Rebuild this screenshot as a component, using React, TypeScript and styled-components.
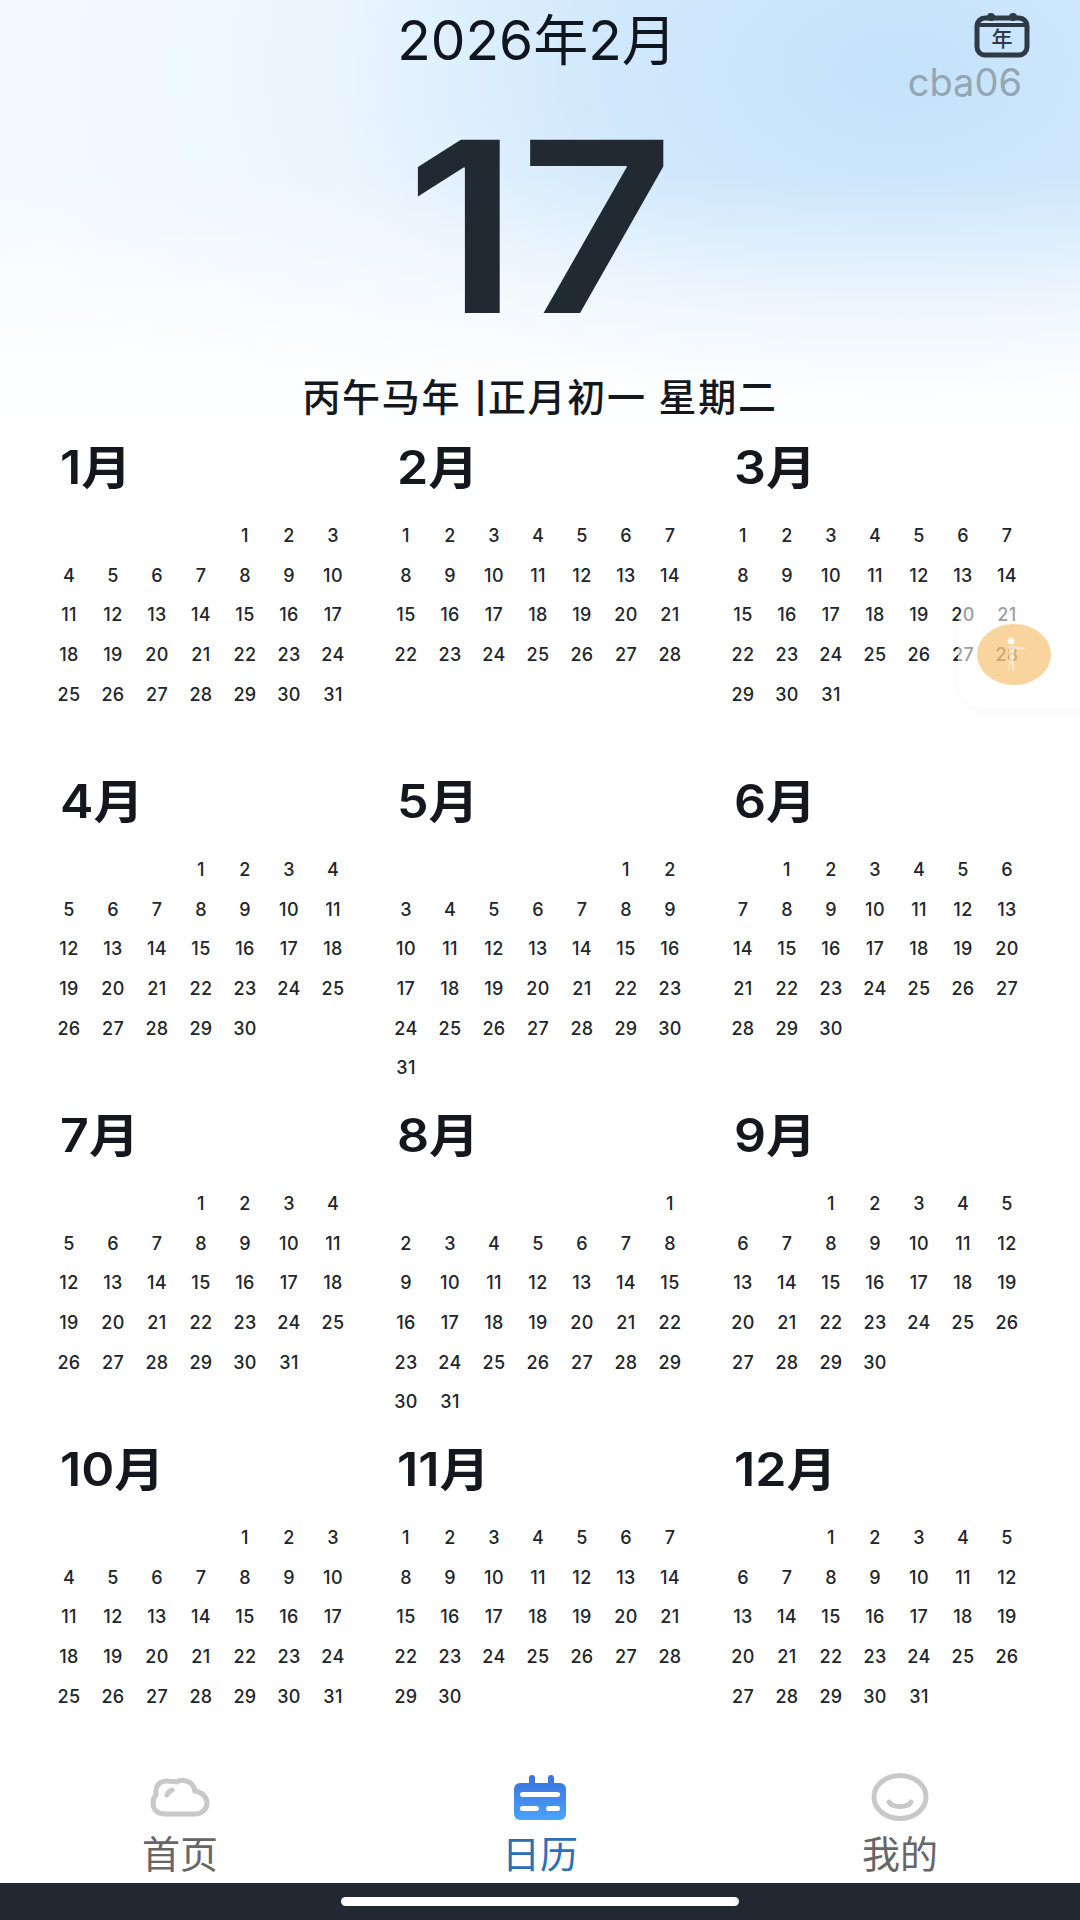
import styled, { createGlobalStyle } from 'styled-components';

const MONTHS = [
  { name: '1月', offset: 4, days: 31 },
  { name: '2月', offset: 0, days: 28 },
  { name: '3月', offset: 0, days: 31 },
  { name: '4月', offset: 3, days: 30 },
  { name: '5月', offset: 5, days: 31 },
  { name: '6月', offset: 1, days: 30 },
  { name: '7月', offset: 3, days: 31 },
  { name: '8月', offset: 6, days: 31 },
  { name: '9月', offset: 2, days: 30 },
  { name: '10月', offset: 4, days: 31 },
  { name: '11月', offset: 0, days: 30 },
  { name: '12月', offset: 2, days: 31 },
];

const App = () => {
  return (
    <Page>
      <GlobalStyle />
      <Hero>
        <Header>
          <span />
          <MonthTitle>2026年2月</MonthTitle>
          <YearSwitch>
            <YearIcon>
              <svg width='56' height='46' viewBox='0 0 56 46'>
                <rect x='3' y='6' width='50' height='37' rx='8' fill='none' stroke='#2e3a45' strokeWidth='5' />
                <path d='M3 13h50' stroke='#2e3a45' strokeWidth='4' />
                <circle cx='17' cy='5' r='4' fill='#2e3a45' />
                <circle cx='39' cy='5' r='4' fill='#2e3a45' />
              </svg>
              <YearGlyph>年</YearGlyph>
            </YearIcon>
            <UserTag>cba06</UserTag>
          </YearSwitch>
        </Header>
        <BigDay>17</BigDay>
        <LunarLine>
          丙午马年 <LunarBar>|</LunarBar>正月初一 星期二
        </LunarLine>
      </Hero>

      <YearGrid>
        {MONTHS.map((m) => (
          <Month key={m.name}>
            <MonthName>{m.name}</MonthName>
            <Days>
              {Array.from({ length: m.offset }, (_, i) => (
                <span key={'e' + i} />
              ))}
              {Array.from({ length: m.days }, (_, i) => (
                <Day key={i}>{i + 1}</Day>
              ))}
            </Days>
          </Month>
        ))}
      </YearGrid>

      <FloatPanel>
        <FloatBall>
          <svg width='26' height='34' viewBox='0 0 26 34' fill='#fff'>
            <circle cx='10' cy='4' r='3.5' opacity='0.8' />
            <path d='M7.500 9h5l12 2v1l-11.500 .5-.5 8 1 13h-2l-1.500-11-1.500 11H7.500l1-14z' opacity='0.55' />
          </svg>
        </FloatBall>
      </FloatPanel>

      <TabBar>
        <Tab>
          <TabIcon>
            <svg width='60' height='40' viewBox='0 0 60 40' fill='none' stroke='#c8c8c8' strokeWidth='5'>
              <path d='M15 37C7 37 3 32 3 26c0-4 1-6 3-8C5 9 9 4 17 4c4 0 7 1 10 1 3-2 6-2 9-1 5 1 8 5 9 10 7 1 12 6 12 12 0 6-5 11-12 11z' />
              <path d='M17 18c1-3 3-4 5-5' strokeLinecap='round' />
            </svg>
          </TabIcon>
          <TabLabel>首页</TabLabel>
        </Tab>
        <Tab $active>
          <TabIcon>
            <svg width='54' height='47' viewBox='0 0 54 47'>
              <defs>
                <linearGradient id='calFill' x1='0' y1='0' x2='0' y2='1'>
                  <stop offset='0' stopColor='#3a78df' />
                  <stop offset='1' stopColor='#4aa4ff' />
                </linearGradient>
              </defs>
              <rect x='16' y='1' width='6' height='16' rx='3' fill='#3a78df' />
              <rect x='35' y='1' width='6' height='16' rx='3' fill='#3a78df' />
              <rect x='1' y='9' width='52' height='37' rx='6' fill='url(#calFill)' />
              <rect x='7' y='18' width='40' height='5' rx='2.5' fill='#fff' />
              <rect x='7' y='32' width='19' height='5' rx='2.5' fill='#fff' />
              <rect x='33' y='32' width='14' height='5' rx='2.5' fill='#fff' />
            </svg>
          </TabIcon>
          <TabLabel $active>日历</TabLabel>
        </Tab>
        <Tab>
          <TabIcon>
            <svg width='58' height='48' viewBox='0 0 58 48' fill='none' stroke='#c8c8c8' strokeWidth='5'>
              <ellipse cx='29' cy='24' rx='26' ry='21.5' />
              <path d='M18 29c3 6 19 6 22 0' strokeLinecap='round' />
            </svg>
          </TabIcon>
          <TabLabel>我的</TabLabel>
        </Tab>
      </TabBar>

      <NavBar>
        <HomePill />
      </NavBar>
    </Page>
  );
};

const GlobalStyle = createGlobalStyle`
  html, body {
    margin: 0;
    padding: 0;
    background: #fff;
  }
  * {
    box-sizing: border-box;
  }
`;

const Page = styled.div`
  position: relative;
  width: 1080px;
  height: 1920px;
  overflow: hidden;
  display: flex;
  flex-direction: column;
  background: #fff;
  font-family: Inter, 'Noto Sans CJK SC', sans-serif;
`;

const Hero = styled.div`
  height: 437px;
  display: flex;
  flex-direction: column;
  align-items: center;
  background:
    linear-gradient(180deg, rgba(255, 255, 255, 0) 40%, #fff 98%),
    radial-gradient(ellipse 900px 560px at 900px 70px, #c4e2fb 0%, #d2e9fc 35%, rgba(232, 244, 254, 0.75) 65%, rgba(255, 255, 255, 0) 100%),
    linear-gradient(90deg, #f4faff 0%, #fbfdff 100%);
`;

const Header = styled.div`
  width: 100%;
  height: 107px;
  display: grid;
  grid-template-columns: 1fr auto 1fr;
  align-items: start;
`;

const MonthTitle = styled.h1`
  margin: 9px 0 0;
  font-weight: 400;
  font-size: 55px;
  line-height: 62px;
  color: #10161f;
  transform: translateX(-3px);
`;

const YearSwitch = styled.div`
  justify-self: end;
  margin: 12px 50px 0 0;
  display: flex;
  flex-direction: column;
  align-items: flex-end;
`;

const YearIcon = styled.div`
  position: relative;
  width: 56px;
  height: 46px;
`;

const YearGlyph = styled.span`
  position: absolute;
  left: 0;
  right: 0;
  top: 15px;
  text-align: center;
  font-size: 21px;
  line-height: 24px;
  font-weight: 500;
  color: #2e3a45;
`;

const UserTag = styled.div`
  margin: 4px 8px 0 0;
  font-size: 38px;
  line-height: 40px;
  color: #93a6b2;
`;

const BigDay = styled.div`
  font-weight: 600;
  font-size: 238px;
  line-height: 238px;
  color: #212a33;
  transform: scaleX(1.13);
`;

const LunarLine = styled.div`
  margin-top: 30px;
  font-weight: 500;
  font-size: 38px;
  line-height: 44px;
  letter-spacing: 1.700px;
  white-space: pre;
  color: #14181e;
`;

const LunarBar = styled.span`
  font-size: 30px;
  font-weight: 700;
  vertical-align: 2px;
  margin-left: 2px;
`;

const YearGrid = styled.div`
  display: grid;
  grid-template-columns: repeat(3, 337px);
  grid-auto-rows: 334px;
  padding-left: 47px;
`;

const Month = styled.section`
  display: flex;
  flex-direction: column;
`;

const MonthName = styled.h2`
  margin: 0 0 0 13px;
  height: 78px;
  font-weight: 600;
  font-size: 46px;
  line-height: 60px;
  color: #14181e;
  transform: scaleX(1.09);
  transform-origin: left center;
`;

const Days = styled.div`
  display: grid;
  grid-template-columns: repeat(7, 44px);
  grid-auto-rows: 39.7px;
  padding-top: 1px;
`;

const Day = styled.span`
  font-weight: 500;
  font-size: 18px;
  line-height: 39.7px;
  letter-spacing: 0.4px;
  text-align: center;
  color: #22262b;
`;

const FloatPanel = styled.div`
  position: absolute;
  left: 958px;
  top: 600px;
  width: 150px;
  height: 108px;
  display: flex;
  align-items: center;
  border-radius: 26px;
  background: rgba(255, 255, 255, 0.55);
  box-shadow: 0 3px 14px rgba(0, 0, 0, 0.03);
`;

const FloatBall = styled.div`
  margin-left: 19px;
  width: 74px;
  height: 61px;
  border-radius: 50%;
  display: flex;
  align-items: center;
  justify-content: center;
  background: rgba(246, 176, 78, 0.55);
`;

const TabBar = styled.nav`
  display: grid;
  grid-template-columns: repeat(3, 1fr);
  height: 110px;
`;

const Tab = styled.div<{ $active?: boolean }>`
  display: flex;
  flex-direction: column;
  align-items: center;
`;

const TabIcon = styled.div`
  height: 58px;
  padding-bottom: 10px;
  display: flex;
  align-items: center;
  justify-content: center;
`;

const TabLabel = styled.span<{ $active?: boolean }>`
  font-size: 38px;
  line-height: 46px;
  color: ${(p) => (p.$active ? '#2a6fb8' : '#666')};
`;

const NavBar = styled.div`
  flex: 1;
  display: flex;
  align-items: center;
  justify-content: center;
  background: #222831;
`;

const HomePill = styled.div`
  width: 398px;
  height: 9px;
  border-radius: 5px;
  background: #fff;
`;

export default App;
